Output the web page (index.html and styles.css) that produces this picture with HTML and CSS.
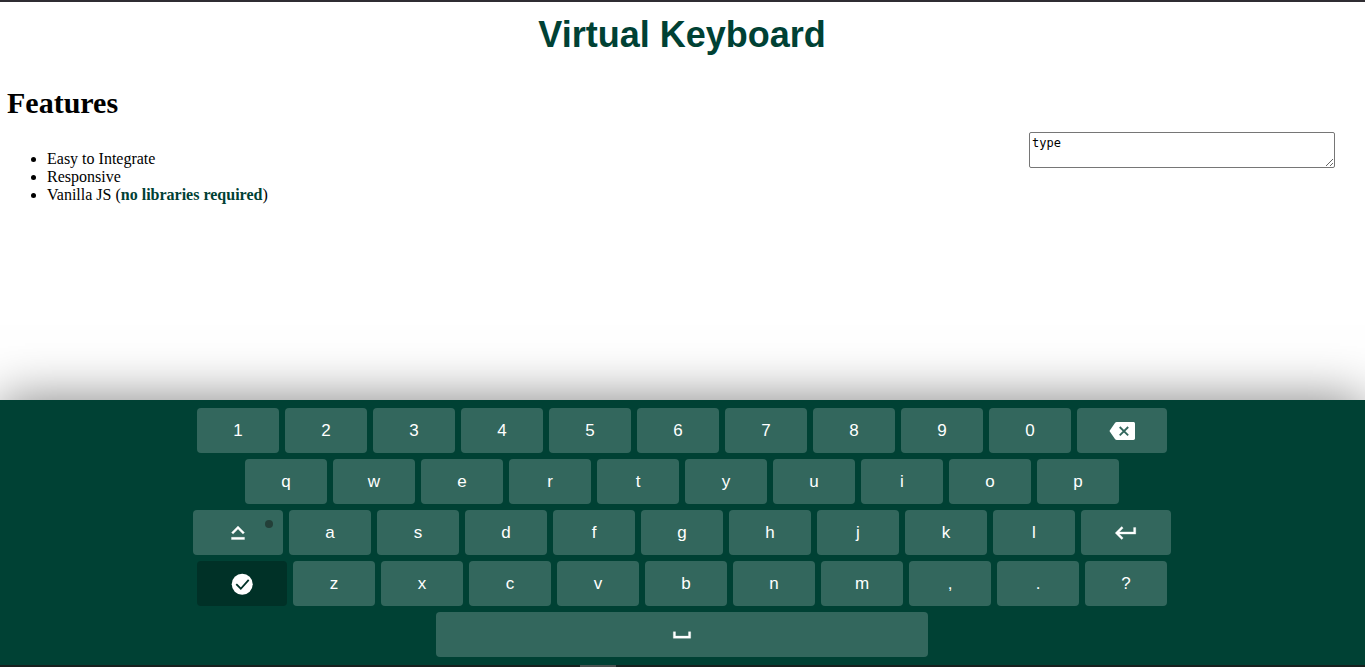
FILE: index.html
```html
<!DOCTYPE html>
<html lang="en">
<head>
<meta charset="utf-8">
<meta name="viewport" content="width=device-width, initial-scale=1">
<title>Virtual Keyboard</title>
<link rel="stylesheet" href="styles.css">
</head>
<body>
<div class="top-edge"></div>
<main class="page">
  <h1 class="title">Virtual Keyboard</h1>
  <div class="content">
    <section class="features">
      <h2 class="features-title">Features</h2>
      <ul class="features-list">
        <li>Easy to Integrate</li>
        <li>Responsive</li>
        <li>Vanilla JS (<strong class="accent">no libraries required</strong>)</li>
      </ul>
    </section>
    <textarea class="input" rows="2" aria-label="Text input" spellcheck="false">type</textarea>
  </div>
</main>
<div class="keyboard">
  <div class="row">
    <button type="button" class="key">1</button>
    <button type="button" class="key">2</button>
    <button type="button" class="key">3</button>
    <button type="button" class="key">4</button>
    <button type="button" class="key">5</button>
    <button type="button" class="key">6</button>
    <button type="button" class="key">7</button>
    <button type="button" class="key">8</button>
    <button type="button" class="key">9</button>
    <button type="button" class="key">0</button>
    <button type="button" class="key key-wide" aria-label="Backspace"><svg class="icon" viewBox="0 0 24 24"><path d="M22.500 3.700H7.200c-.7 0-1.300.3-1.700.9L.4 12l5.100 7.400c.4.600 1 .9 1.700.9h15.300c.9 0 1.500-.6 1.500-1.500V5.200c0-.9-.6-1.500-1.500-1.500z"/><path class="cutout" d="M9.900 8.300l7.800 7.800M17.700 8.300l-7.800 7.800"/></svg></button>
  </div>
  <div class="row">
    <button type="button" class="key">q</button>
    <button type="button" class="key">w</button>
    <button type="button" class="key">e</button>
    <button type="button" class="key">r</button>
    <button type="button" class="key">t</button>
    <button type="button" class="key">y</button>
    <button type="button" class="key">u</button>
    <button type="button" class="key">i</button>
    <button type="button" class="key">o</button>
    <button type="button" class="key">p</button>
  </div>
  <div class="row">
    <button type="button" class="key key-wide key-toggle" aria-label="Caps lock" aria-pressed="false"><svg class="icon icon-bold" viewBox="0 0 24 24"><path d="M12 8.410L16.590 13 18 11.590l-6-6-6 6L7.410 13 12 8.410zM6 18h12v-2H6v2z"/></svg></button>
    <button type="button" class="key">a</button>
    <button type="button" class="key">s</button>
    <button type="button" class="key">d</button>
    <button type="button" class="key">f</button>
    <button type="button" class="key">g</button>
    <button type="button" class="key">h</button>
    <button type="button" class="key">j</button>
    <button type="button" class="key">k</button>
    <button type="button" class="key">l</button>
    <button type="button" class="key key-wide" aria-label="Enter"><svg class="icon icon-bold" viewBox="0 0 24 24"><path d="M19 7v4H5.830l3.580-3.590L8 6l-6 6 6 6 1.410-1.410L5.830 13H21V7z"/></svg></button>
  </div>
  <div class="row">
    <button type="button" class="key key-wide key-dark" aria-label="Done"><svg class="icon" viewBox="0 0 24 24"><circle cx="12.200" cy="12.200" r="9.700"/><path class="cutout" d="M6.700 12.200l4.200 4.200 7.300-8.200"/></svg></button>
    <button type="button" class="key">z</button>
    <button type="button" class="key">x</button>
    <button type="button" class="key">c</button>
    <button type="button" class="key">v</button>
    <button type="button" class="key">b</button>
    <button type="button" class="key">n</button>
    <button type="button" class="key">m</button>
    <button type="button" class="key">,</button>
    <button type="button" class="key">.</button>
    <button type="button" class="key">?</button>
  </div>
  <div class="row">
    <button type="button" class="key key-space" aria-label="Space"><svg class="icon icon-bold" viewBox="0 0 24 24"><path d="M18 9v4H6V9H4v6h16V9z"/></svg></button>
  </div>
</div>
<div class="bottom-edge"><div class="bottom-tab"></div></div>
</body>
</html>
```

FILE: styles.css
```css
* {
  box-sizing: border-box;
}

body {
  display: flex;
  flex-direction: column;
  min-height: 100vh;
  margin: 0;
  overflow-x: hidden;
  background: #fff;
  color: #000;
  font-family: "Liberation Serif", "Times New Roman", serif;
  font-size: 16px;
  line-height: 18px;
}

.top-edge {
  height: 2px;
  background: #2f2d32;
}

.page {
  flex: 1;
  padding: 9px 30px 8px 7px;
}

.title {
  margin: 0 0 24px;
  padding-left: 22px;
  color: #004134;
  font-family: "Liberation Sans", Arial, sans-serif;
  font-size: 36px;
  line-height: 48px;
  text-align: center;
}

.content {
  display: flex;
  justify-content: space-between;
  align-items: flex-start;
}

.features-title {
  margin: 0 0 27px;
  font-size: 30px;
  line-height: 40px;
}

.features-list {
  margin: 0;
  padding-left: 40px;
}

.accent {
  color: #004134;
}

.input {
  width: 306px;
  margin: 49px 0 0;
  padding: 3px 2px 1px;
  border: 1px solid #767676;
  border-radius: 2px;
  font-family: "DejaVu Sans Mono", monospace;
  font-size: 12px;
  line-height: 15px;
}

.keyboard {
  display: flex;
  flex-direction: column;
  gap: 6px;
  padding: 8px 5px 8px 4px;
  background: #004134;
  box-shadow: 0 0 50px rgba(0, 0, 0, 0.5);
}

.row {
  display: flex;
  justify-content: center;
  gap: 6px;
}

.key {
  position: relative;
  display: flex;
  flex: 0 1 82px;
  align-items: center;
  justify-content: center;
  min-width: 0;
  height: 45px;
  padding: 0;
  border: 0;
  border-radius: 4px;
  background: #33675d;
  color: #fff;
  font-family: "Liberation Sans", Arial, sans-serif;
  font-size: 17px;
  cursor: pointer;
}

.key-wide {
  flex-basis: 90px;
}

.key-space {
  flex-basis: 492px;
}

.key-dark {
  background: #003127;
}

.key-toggle::after {
  content: "";
  position: absolute;
  top: 10px;
  right: 10px;
  width: 8px;
  height: 8px;
  border-radius: 50%;
  background: #233f38;
}

.icon {
  width: 26px;
  height: 26px;
  fill: currentColor;
}

.icon-bold {
  stroke: currentColor;
  stroke-width: 0.3;
}

.cutout {
  fill: none;
  stroke: #33675d;
  stroke-width: 1.7;
}

.key-dark .cutout {
  stroke: #003127;
}

.bottom-edge {
  height: 2px;
  padding-left: 580px;
  background: #17211f;
}

.bottom-tab {
  width: 36px;
  height: 2px;
  background: #4a504f;
}
```
